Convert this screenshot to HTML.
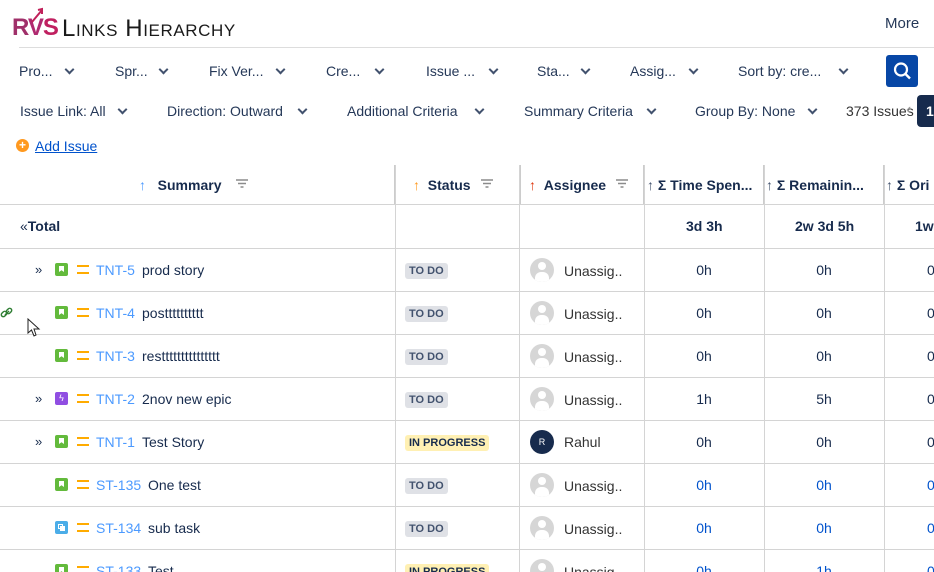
<!DOCTYPE html>
<html><head><meta charset="utf-8"><style>
*{box-sizing:border-box;margin:0;padding:0}
html,body{width:934px;height:572px;overflow:hidden}
body{background:#fff;font-family:"Liberation Sans",Arial,sans-serif;position:relative;color:#172b4d}
.a{position:absolute;white-space:nowrap}
.f{font-size:14px;color:#253858}
.chev{display:inline-block;width:7px;height:7px;border-right:2px solid #42526e;border-bottom:2px solid #42526e;transform:rotate(45deg);position:absolute}
.hl{position:absolute;left:0;width:934px;height:1px;background:#d4d4d4}
.vl{position:absolute;top:165px;height:407px;width:1px;background:#d4d4d4}
.th{font-weight:bold;font-size:14px;color:#172b4d}
.arr{color:#42526e;font-weight:normal}
.ic{position:absolute;width:13px;height:13px;border-radius:2px}
.ic.s:after{content:"";position:absolute;left:4px;top:3px;width:5px;height:6px;background:#fff;clip-path:polygon(0 0,100% 0,100% 100%,50% 70%,0 100%)}
.key{color:#4c9aff;font-size:14px}
.sm{font-size:14px;color:#172b4d}
.lz2{position:absolute;width:12px;height:9px;border-top:2px solid #ffab00;border-bottom:2px solid #ffab00}
.lo{position:absolute;font-size:11px;font-weight:bold;padding:2px 4px;border-radius:3px;background:#dfe1e6;color:#42526e}
.ip{background:#fff0b3;color:#172b4d}
.av{position:absolute;width:24px;height:24px;border-radius:50%;background:#d6d6d6;overflow:hidden}
.av:before{content:"";position:absolute;left:8px;top:4px;width:8px;height:8px;border-radius:50%;background:#fff}
.av:after{content:"";position:absolute;left:5px;top:14px;width:14px;height:10px;border-radius:6px 6px 0 0;background:#fff}
.num{position:absolute;font-size:14px;color:#172b4d;text-align:center}
.flt{position:absolute;width:12px;height:9px}
.flt:before{content:"";position:absolute;left:0;top:0;width:12px;height:1.5px;background:#8c8c8c;box-shadow:2px 3px 0 -0px #8c8c8c}
.flt:after{content:"";position:absolute;left:2px;top:3px;width:8px;height:1.5px;background:#8c8c8c;box-shadow:2px 3px 0 -0px #fff}
.fl3{position:absolute;width:4px;height:1.5px;background:#8c8c8c}
</style></head><body>
<div class="a" style="left:12px;top:14px;font-size:24px;font-weight:bold;color:#a0306a;letter-spacing:-1px">R<span style="color:#b02a70">V</span><span style="color:#c02060">S</span></div>
<svg class="a" style="left:30px;top:6px" width="16" height="18"><path d="M2 16 L12 4 M8 4 L12 3 L12 8" stroke="#c0205a" stroke-width="2" fill="none"/></svg>
<div class="a" style="left:62px;top:15px;font-size:24px;color:#1a1a1a;font-variant:small-caps;letter-spacing:0.6px">Links Hierarchy</div>
<div class="a f" style="left:885px;top:15px;font-size:15px">More</div>
<div class="a" style="left:19px;top:47px;width:915px;height:1px;background:#ddd"></div>
<div class="a f" style="left:19px;top:63px">Pro...</div><i class="chev" style="left:66px;top:66px"></i>
<div class="a f" style="left:115px;top:63px">Spr...</div><i class="chev" style="left:160px;top:66px"></i>
<div class="a f" style="left:209px;top:63px">Fix Ver...</div><i class="chev" style="left:277px;top:66px"></i>
<div class="a f" style="left:326px;top:63px">Cre...</div><i class="chev" style="left:376px;top:66px"></i>
<div class="a f" style="left:426px;top:63px">Issue ...</div><i class="chev" style="left:490px;top:66px"></i>
<div class="a f" style="left:537px;top:63px">Sta...</div><i class="chev" style="left:582px;top:66px"></i>
<div class="a f" style="left:630px;top:63px">Assig...</div><i class="chev" style="left:690px;top:66px"></i>
<div class="a f" style="left:738px;top:63px">Sort by: cre...</div><i class="chev" style="left:840px;top:66px"></i>
<div class="a" style="left:886px;top:55px;width:32px;height:32px;background:#0747a6;border-radius:3px"></div>
<svg class="a" style="left:892px;top:61px" width="20" height="20"><circle cx="9" cy="8.5" r="6" stroke="#fff" stroke-width="2.2" fill="none"/><path d="M13.5 13 L18 17.5" stroke="#fff" stroke-width="2.4"/></svg>
<div class="a f" style="left:20px;top:103px">Issue Link: All</div><i class="chev" style="left:119px;top:106px"></i>
<div class="a f" style="left:167px;top:103px">Direction: Outward</div><i class="chev" style="left:299px;top:106px"></i>
<div class="a f" style="left:347px;top:103px">Additional Criteria</div><i class="chev" style="left:476px;top:106px"></i>
<div class="a f" style="left:524px;top:103px">Summary Criteria</div><i class="chev" style="left:648px;top:106px"></i>
<div class="a f" style="left:695px;top:103px">Group By: None</div><i class="chev" style="left:809px;top:106px"></i>
<div class="a" style="left:846px;top:103px;font-size:14px;color:#333">373 Issues</div>
<div class="a" style="left:906px;top:101px;color:#999;font-size:16px">‹</div>
<div class="a" style="left:917px;top:95px;width:20px;height:32px;background:#172b4d;border-radius:4px 0 0 4px;color:#fff;font-weight:bold;font-size:14px;padding:8px 0 0 9px">1</div>
<div class="a" style="left:16px;top:139px;width:13px;height:13px;border-radius:50%;background:#ff991f;color:#fff;font-size:12px;font-weight:bold;line-height:13px;text-align:center">+</div>
<div class="a" style="left:35px;top:138px;font-size:14px;color:#0052cc;text-decoration:underline">Add Issue</div>
<div class="hl" style="top:204px"></div><div class="hl" style="top:248px"></div><div class="hl" style="top:291px"></div><div class="hl" style="top:334px"></div><div class="hl" style="top:377px"></div><div class="hl" style="top:420px"></div><div class="hl" style="top:463px"></div><div class="hl" style="top:506px"></div><div class="hl" style="top:549px"></div>
<div class="vl" style="left:394px;width:2px;height:39px;background:#ccc"></div><div class="vl" style="left:395px"></div>
<div class="vl" style="left:519px;width:2px;height:39px;background:#ccc"></div><div class="vl" style="left:519px"></div>
<div class="vl" style="left:643px;width:2px;height:39px;background:#ccc"></div><div class="vl" style="left:644px"></div>
<div class="vl" style="left:763px;width:2px;height:39px;background:#ccc"></div><div class="vl" style="left:764px"></div>
<div class="vl" style="left:883px;width:2px;height:39px;background:#ccc"></div><div class="vl" style="left:884px"></div>
<div class="a th" style="left:139px;top:177px"><span class="arr" style="color:#4c9aff">↑</span>&nbsp;&nbsp;&nbsp;Summary</div>
<svg class="a" style="left:236px;top:179px" width="12" height="9"><path d="M0 1H12M2 4.5H10M4.5 8H7.5" stroke="#8c8c8c" stroke-width="1.5"/></svg>
<div class="a th" style="left:413px;top:177px"><span class="arr" style="color:#ff991f">↑</span>&nbsp;&nbsp;Status</div>
<svg class="a" style="left:481px;top:179px" width="12" height="9"><path d="M0 1H12M2 4.5H10M4.5 8H7.5" stroke="#8c8c8c" stroke-width="1.5"/></svg>
<div class="a th" style="left:529px;top:177px"><span class="arr" style="color:#de350b">↑</span>&nbsp;&nbsp;Assignee</div>
<svg class="a" style="left:616px;top:179px" width="12" height="9"><path d="M0 1H12M2 4.5H10M4.5 8H7.5" stroke="#8c8c8c" stroke-width="1.5"/></svg>
<div class="a th" style="left:647px;top:177px"><span class="arr">↑</span>&nbsp;Σ Time Spen...</div>
<div class="a th" style="left:766px;top:177px"><span class="arr">↑</span>&nbsp;Σ Remainin...</div>
<div class="a th" style="left:886px;top:177px"><span class="arr">↑</span>&nbsp;Σ Ori</div>
<div class="a th" style="left:20px;top:218px"><span style="font-weight:normal">«</span>Total</div>
<div class="a th" style="left:686px;top:218px">3d 3h</div>
<div class="a th" style="left:795px;top:218px">2w 3d 5h</div>
<div class="a th" style="left:915px;top:218px">1w</div>
<div class="a" style="left:35px;top:262px;font-size:13px">»</div>
<div class="a" style="left:35px;top:391px;font-size:13px">»</div>
<div class="a" style="left:35px;top:434px;font-size:13px">»</div>
<svg class="a" style="left:0;top:306px" width="14" height="14"><path d="M5 9 L9 5" stroke="#2e7d32" stroke-width="1.5"/><rect x="1" y="6" width="6" height="4" rx="2" transform="rotate(-45 4 8)" stroke="#2e7d32" fill="none" stroke-width="1.4"/><rect x="6" y="3" width="6" height="4" rx="2" transform="rotate(-45 9 5)" stroke="#2e7d32" fill="none" stroke-width="1.4"/></svg>
<svg class="a" style="left:27px;top:318px" width="14" height="20"><path d="M1 1 L1 15 L4.5 12 L7 18 L9 17 L7 11 L12 11 Z" fill="#fff" stroke="#222" stroke-width="1"/></svg>

<div class="ic s" style="left:55px;top:263px;background:#63ba3c"></div><div class="lz2" style="left:77px;top:265px"></div><div class="a key" style="left:96px;top:262px">TNT-5</div><div class="a sm" style="left:142px;top:262px">prod story</div>
<div class="ic s" style="left:55px;top:306px;background:#63ba3c"></div><div class="lz2" style="left:77px;top:308px"></div><div class="a key" style="left:96px;top:305px">TNT-4</div><div class="a sm" style="left:142px;top:305px">postttttttttt</div>
<div class="ic s" style="left:55px;top:349px;background:#63ba3c"></div><div class="lz2" style="left:77px;top:351px"></div><div class="a key" style="left:96px;top:348px">TNT-3</div><div class="a sm" style="left:142px;top:348px">resttttttttttttttt</div>
<div class="ic" style="left:55px;top:392px;background:#904ee2;color:#fff;font-size:9px;text-align:center;line-height:13px">ϟ</div><div class="lz2" style="left:77px;top:394px"></div><div class="a key" style="left:96px;top:391px">TNT-2</div><div class="a sm" style="left:142px;top:391px">2nov new epic</div>
<div class="ic s" style="left:55px;top:435px;background:#63ba3c"></div><div class="lz2" style="left:77px;top:437px"></div><div class="a key" style="left:96px;top:434px">TNT-1</div><div class="a sm" style="left:142px;top:434px">Test Story</div>
<div class="ic s" style="left:55px;top:478px;background:#63ba3c"></div><div class="lz2" style="left:77px;top:480px"></div><div class="a key" style="left:96px;top:477px">ST-135</div><div class="a sm" style="left:148px;top:477px">One test</div>
<div class="ic" style="left:55px;top:521px;background:#4bade8"><div style="position:absolute;left:3px;top:3px;width:5px;height:5px;border:1px solid #fff"></div><div style="position:absolute;left:5px;top:5px;width:5px;height:5px;background:#fff"></div></div><div class="lz2" style="left:77px;top:523px"></div><div class="a key" style="left:96px;top:520px">ST-134</div><div class="a sm" style="left:148px;top:520px">sub task</div>
<div class="ic s" style="left:55px;top:564px;background:#63ba3c"></div><div class="lz2" style="left:77px;top:566px"></div><div class="a key" style="left:96px;top:563px">ST-133</div><div class="a sm" style="left:148px;top:563px">Test</div>

<div class="lo" style="left:405px;top:263px">TO DO</div>
<div class="lo" style="left:405px;top:306px">TO DO</div>
<div class="lo" style="left:405px;top:349px">TO DO</div>
<div class="lo" style="left:405px;top:392px">TO DO</div>
<div class="lo ip" style="left:405px;top:435px">IN PROGRESS</div>
<div class="lo" style="left:405px;top:478px">TO DO</div>
<div class="lo" style="left:405px;top:521px">TO DO</div>
<div class="lo ip" style="left:405px;top:564px">IN PROGRESS</div>

<div class="av" style="left:530px;top:258px"></div><div class="a sm" style="left:564px;top:263px;color:#333">Unassig..</div>
<div class="av" style="left:530px;top:301px"></div><div class="a sm" style="left:564px;top:306px;color:#333">Unassig..</div>
<div class="av" style="left:530px;top:344px"></div><div class="a sm" style="left:564px;top:349px;color:#333">Unassig..</div>
<div class="av" style="left:530px;top:387px"></div><div class="a sm" style="left:564px;top:392px;color:#333">Unassig..</div>
<div class="a" style="left:530px;top:430px;width:24px;height:24px;border-radius:50%;background:#172b4d;color:#fff;font-size:9px;text-align:center;line-height:24px">R</div><div class="a sm" style="left:564px;top:434px;color:#333">Rahul</div>
<div class="av" style="left:530px;top:473px"></div><div class="a sm" style="left:564px;top:478px;color:#333">Unassig..</div>
<div class="av" style="left:530px;top:516px"></div><div class="a sm" style="left:564px;top:521px;color:#333">Unassig..</div>
<div class="av" style="left:530px;top:559px"></div><div class="a sm" style="left:564px;top:564px;color:#333">Unassig..</div>

<div class="num" style="left:644px;width:120px;top:262px">0h</div><div class="num" style="left:764px;width:120px;top:262px">0h</div><div class="num" style="left:927px;top:262px">0</div>
<div class="num" style="left:644px;width:120px;top:305px">0h</div><div class="num" style="left:764px;width:120px;top:305px">0h</div><div class="num" style="left:927px;top:305px">0</div>
<div class="num" style="left:644px;width:120px;top:348px">0h</div><div class="num" style="left:764px;width:120px;top:348px">0h</div><div class="num" style="left:927px;top:348px">0</div>
<div class="num" style="left:644px;width:120px;top:391px">1h</div><div class="num" style="left:764px;width:120px;top:391px">5h</div><div class="num" style="left:927px;top:391px">0</div>
<div class="num" style="left:644px;width:120px;top:434px">0h</div><div class="num" style="left:764px;width:120px;top:434px">0h</div><div class="num" style="left:927px;top:434px">0</div>
<div class="num" style="left:644px;width:120px;top:477px;color:#0052cc">0h</div><div class="num" style="left:764px;width:120px;top:477px;color:#0052cc">0h</div><div class="num" style="left:927px;top:477px;color:#0052cc">0</div>
<div class="num" style="left:644px;width:120px;top:520px;color:#0052cc">0h</div><div class="num" style="left:764px;width:120px;top:520px;color:#0052cc">0h</div><div class="num" style="left:927px;top:520px;color:#0052cc">0</div>
<div class="num" style="left:644px;width:120px;top:563px;color:#0052cc">0h</div><div class="num" style="left:764px;width:120px;top:563px;color:#0052cc">1h</div><div class="num" style="left:927px;top:563px;color:#0052cc">0</div>
</body></html>
